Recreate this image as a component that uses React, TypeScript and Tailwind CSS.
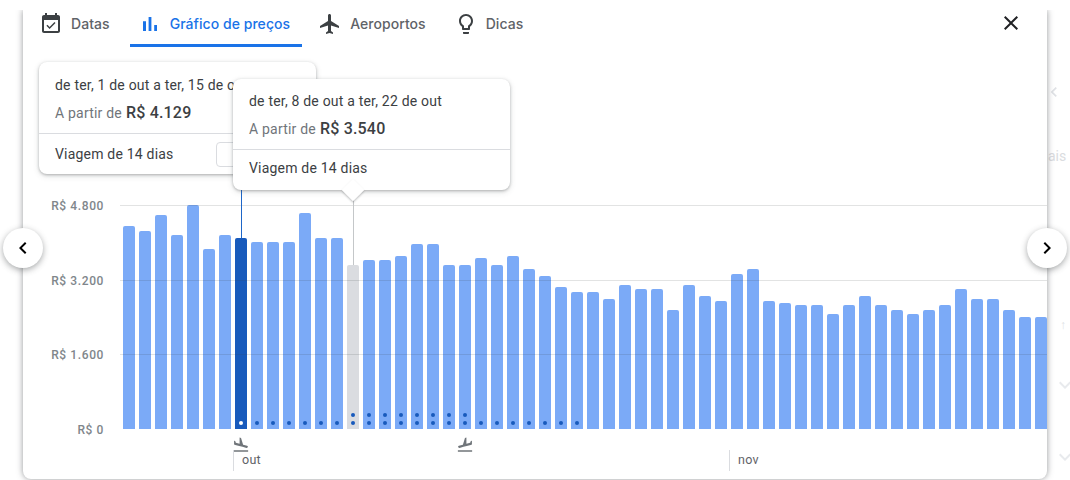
const tops = [226,231,215,235,205,249,235,238,242,242,242,213,238,238,265,260,260,256,244,244,265,265,258,265,256,269,276,287,292,292,299,285,289,289,310,285,296,301,274,269,301,303,305,305,314,305,296,305,310,314,310,305,289,299,299,310,317,317];
const BASE = 429;
const rowOne = (i: number) => i >= 7 && i <= 21;
const rowTwo = (i: number) => i >= 14 && i <= 28;

function Icon({ d, className }: { d: string; className: string }) {
  return (
    <svg viewBox="0 0 24 24" className={className} fill="currentColor">
      <path d={d} />
    </svg>
  );
}

const icons = {
  calendar: "M16.53 11.06L15.47 10l-4.88 4.88-2.12-2.12-1.06 1.06L10.59 17l5.94-5.94zM19 3h-1V1h-2v2H8V1H6v2H5c-1.11 0-1.99.9-1.99 2L3 19c0 1.1.89 2 2 2h14c1.1 0 2-.9 2-2V5c0-1.1-.9-2-2-2zm0 16H5V8h14v11z",
  chart: "M5 9.2h3V19H5zM10.6 5h2.8v14h-2.8zm5.6 8H19v6h-2.8z",
  plane: "M21 16v-2l-8-5V3.5c0-.83-.67-1.5-1.5-1.5S10 2.67 10 3.5V9l-8 5v2l8-2.5V19l-2 1.5V22l3.5-1 3.5 1v-1.5L13 19v-5.5l8 2.5z",
  bulb: "M9 21c0 .55.45 1 1 1h4c.55 0 1-.45 1-1v-1H9v1zm3-19C8.14 2 5 5.14 5 9c0 2.38 1.19 4.47 3 5.74V17c0 .55.45 1 1 1h6c.55 0 1-.45 1-1v-2.26c1.81-1.27 3-3.36 3-5.74 0-3.86-3.14-7-7-7zm2.85 11.1l-.85.6V16h-4v-2.3l-.85-.6C7.8 12.16 7 10.63 7 9c0-2.76 2.24-5 5-5s5 2.24 5 5c0 1.63-.8 3.16-2.15 4.1z",
  close: "M19 6.41L17.59 5 12 10.59 6.41 5 5 6.41 10.59 12 5 17.59 6.41 19 12 13.41 17.59 19 19 17.59 13.41 12z",
  left: "M15.41 7.41L14 6l-6 6 6 6 1.41-1.41L10.83 12z",
  right: "M8.59 16.59L10 18l6-6-6-6-1.41 1.41L13.17 12z",
  land: "M2.5 19h19v2h-19zm7.18-5.73l4.35 1.16 5.31 1.42c.8.21 1.62-.26 1.84-1.06.21-.8-.26-1.62-1.06-1.84l-5.31-1.42-2.76-9.02L10.12 2v8.28L5.15 8.95l-.93-2.32-1.45-.39v5.17l1.6.43 5.31 1.43z",
};

function Tab({ icon, label, active }: { icon: string; label: string; active?: boolean }) {
  return (
    <div className={`flex h-[37px] items-center gap-2 border-b-[3px] pb-[6px] pl-2 pr-3 ${active ? "border-[#1a73e8] text-[#1a73e8]" : "border-transparent text-[#5f6368]"}`}>
      <Icon d={icon} className={`h-6 w-6 ${active ? "text-[#1a73e8]" : "text-[#3c4043]"}`} />
      <span className="mb-[2px] [font-family:Inter,Roboto,sans-serif] text-[14px] font-medium tracking-[0.05px]">{label}</span>
    </div>
  );
}

function Tooltip({ dates, price, className, headClass, footClass, children }: { dates: string; price: string; className: string; headClass: string; footClass: string; children?: React.ReactNode }) {
  return (
    <div className={`absolute w-[277px] rounded-lg bg-white text-[14px] tracking-[0.2px] text-[#3c4043] shadow-[0_1px_3px_rgba(60,64,67,0.35),0_2px_6px_rgba(60,64,67,0.15)] ${className}`}>
      <div className={`flex flex-col gap-[9px] border-b border-[#dadce0] px-4 ${headClass}`}>
        <div className="leading-[18px] whitespace-nowrap">{dates}</div>
        <div className="flex items-center gap-1 leading-[20px] text-[#70757a]">
          A partir de <span className="text-[16px] font-medium text-[#3c4043]">{price}</span>
        </div>
      </div>
      <div className={`flex items-center px-4 ${footClass}`}>
        <span>Viagem de 14 dias</span>
        {children}
      </div>
    </div>
  );
}

export default function App() {
  return (
    <div className="relative h-[480px] w-[1070px] overflow-hidden bg-white pt-[10px] [font-family:Roboto,'Liberation_Sans',sans-serif]">
      {/* faded page behind the dialog */}
      <div className="absolute left-[1044px] top-[82px] text-[#dfe1e5]">
        <Icon d={icons.left} className="h-5 w-5" />
      </div>
      <div className="absolute left-[1048px] top-[146px] text-[14px] text-[#dadce0]">ais</div>
      <div className="absolute left-[1060px] top-[316px] text-[12px] text-[#e0e2e5]">↑</div>
      <div className="absolute left-[1053px] top-[373px] rotate-90 text-[#e8eaed]">
        <Icon d={icons.right} className="h-6 w-6" />
      </div>
      <div className="absolute left-[1053px] top-[445px] rotate-90 text-[#e8eaed]">
        <Icon d={icons.right} className="h-6 w-6" />
      </div>

      {/* dialog */}
      <div className="relative ml-[23px] flex h-[469px] w-[1024px] flex-col rounded-b-lg bg-white shadow-[0_0_6px_rgba(60,64,67,0.55)] [clip-path:inset(0_-8px_-8px_-8px)]">
        <div className="flex items-start justify-between pl-2 pr-[24px]">
          <div className="flex gap-2">
            <Tab icon={icons.calendar} label="Datas" />
            <Tab icon={icons.chart} label="Gráfico de preços" active />
            <Tab icon={icons.plane} label="Aeroportos" />
            <Tab icon={icons.bulb} label="Dicas" />
          </div>
          <Icon d={icons.close} className="mt-[1px] h-6 w-6 text-[#202124]" />
        </div>

        {/* chart */}
        <div className="flex flex-1 pt-[158px]">
          <div className="mt-[1px] flex h-[264px] w-[81px] flex-none flex-col items-end justify-between pb-[40px] text-[12px] font-medium leading-[0] tracking-[0.6px] text-[#80868b]">
            <span>R$ 4.800</span>
            <span>R$ 3.200</span>
            <span>R$ 1.600</span>
            <span>R$ 0</span>
          </div>
          <div className="relative ml-[16px] flex-1">
            <div className="flex h-[224px] items-end gap-[4px] pl-[3px]">
              {tops.map((t, i) => (
                <div
                  key={i}
                  className={`flex w-[12px] flex-none flex-col items-center justify-end gap-[4px] rounded-t-[2px] pb-[4px] ${i === 7 ? "bg-[#185abc]" : i === 14 ? "bg-[#dadce0]" : "bg-[#7baaf7]"}`}
                  style={{ height: BASE - t }}
                >
                  {rowTwo(i) && <span className="h-[4px] w-[4px] rounded-full bg-[#185abc]" />}
                  {rowOne(i) && <span className={`h-[4px] w-[4px] rounded-full ${i === 7 ? "bg-white" : "bg-[#185abc]"}`} />}
                </div>
              ))}
            </div>

            {/* grid lines over the bars */}
            <div className="absolute left-0 right-0 top-0 h-px bg-[#3c4043]/15" />
            <div className="absolute left-0 right-0 top-[75px] h-px bg-[#3c4043]/15" />
            <div className="absolute left-0 right-0 top-[149px] h-px bg-[#3c4043]/15" />

            {/* axis */}
            <div className="relative h-[40px]">
              <Icon d={icons.land} className="absolute left-[112px] top-[7px] h-[18px] w-[18px] text-[#70757a]" />
              <Icon d={icons.land} className="absolute left-[336px] top-[7px] h-[18px] w-[18px] -scale-x-100 text-[#70757a]" />
            </div>
          </div>
        </div>

        {/* months */}
        <div className="absolute left-[210px] top-[440px] flex h-[21px] items-center border-l border-[#dadce0] pl-2 text-[12.5px] tracking-[0.3px] text-[#5f6368]">out</div>
        <div className="absolute left-[706px] top-[440px] flex h-[21px] items-center border-l border-[#dadce0] pl-2 text-[12.5px] tracking-[0.3px] text-[#5f6368]">nov</div>

        {/* selection stems */}
        <div className="absolute left-[218px] top-[175px] h-[53px] w-px bg-[#1e66c8]" />
        <div className="absolute left-[330px] top-[190px] h-[65px] w-px bg-[#c4c7c9]" />

        <Tooltip dates="de ter, 1 de out a ter, 15 de out" price="R$ 4.129" className="left-[16px] top-[52px]" headClass="h-[72px] pt-[14px]" footClass="h-[40px]">
          <div className="ml-[42px] h-[25px] w-[60px] rounded border border-[#dadce0]" />
        </Tooltip>
        <Tooltip dates="de ter, 8 de out a ter, 22 de out" price="R$ 3.540" className="left-[210px] top-[69px]" headClass="h-[71px] pt-[13px]" footClass="h-[40px] pb-[3px]" />
        <div className="absolute left-[322px] top-[172px] h-[16px] w-[16px] rotate-45 bg-white shadow-[1px_1px_2px_rgba(60,64,67,0.3)]" />
      </div>

      {/* carousel arrows */}
      <div className="absolute left-[3px] top-[228px] flex h-10 w-10 items-center justify-center rounded-full bg-white shadow-[0_2px_6px_rgba(60,64,67,0.45)]">
        <Icon d={icons.left} className="h-6 w-6 text-black" />
      </div>
      <div className="absolute left-[1027px] top-[228px] flex h-10 w-10 items-center justify-center rounded-full bg-white shadow-[0_2px_6px_rgba(60,64,67,0.45)]">
        <Icon d={icons.right} className="h-6 w-6 text-black" />
      </div>
    </div>
  );
}
